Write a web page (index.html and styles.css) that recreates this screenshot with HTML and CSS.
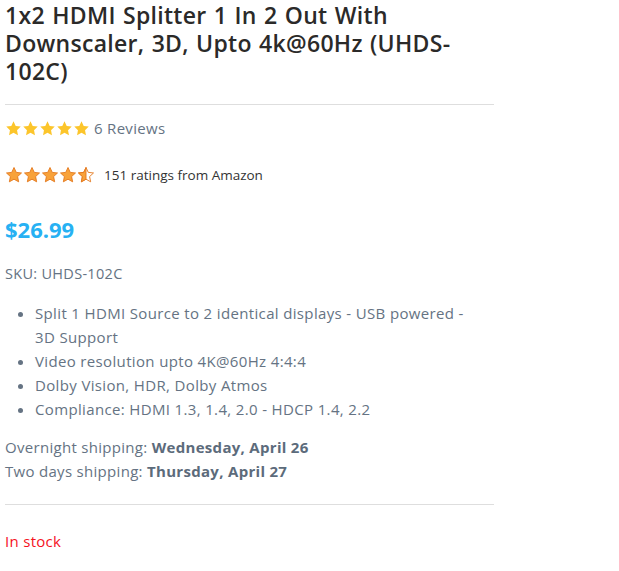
FILE: index.html
```html
<!DOCTYPE html>
<html lang="en">
  <head>
    <meta charset="utf-8">
    <link rel="stylesheet" href="styles.css">
    <title>1x2 HDMI Splitter (UHDS-102C)</title>
  </head>
  <body>
    <div class="product">
      <h1 class="product__title">1x2 HDMI Splitter 1 In 2 Out With Downscaler, 3D, Upto 4k@60Hz (UHDS-102C)</h1>

      <hr class="product__rule">

      <div class="reviews">
        <span class="stars stars--site">
          <svg viewBox="0 0 24 24"><path d="M12 1.8l3.1 6.6 7.1.9-5.2 5 1.3 7.1L12 17.9l-6.3 3.5L7 14.3l-5.2-5 7.1-.9z"/></svg>
          <svg viewBox="0 0 24 24"><path d="M12 1.8l3.1 6.6 7.1.9-5.2 5 1.3 7.1L12 17.9l-6.3 3.5L7 14.3l-5.2-5 7.1-.9z"/></svg>
          <svg viewBox="0 0 24 24"><path d="M12 1.8l3.1 6.6 7.1.9-5.2 5 1.3 7.1L12 17.9l-6.3 3.5L7 14.3l-5.2-5 7.1-.9z"/></svg>
          <svg viewBox="0 0 24 24"><path d="M12 1.8l3.1 6.6 7.1.9-5.2 5 1.3 7.1L12 17.9l-6.3 3.5L7 14.3l-5.2-5 7.1-.9z"/></svg>
          <svg viewBox="0 0 24 24"><path d="M12 1.8l3.1 6.6 7.1.9-5.2 5 1.3 7.1L12 17.9l-6.3 3.5L7 14.3l-5.2-5 7.1-.9z"/></svg>
        </span>
        <span class="reviews__count">6 Reviews</span>
      </div>

      <div class="amazon">
        <span class="stars stars--amazon">
          <svg viewBox="0 0 24 24"><path class="fill" d="M12 2l3 6.5 7 .8-5.2 4.8 1.4 7L12 17.6l-6.2 3.5 1.4-7L2 9.3l7-.8z"/></svg>
          <svg viewBox="0 0 24 24"><path class="fill" d="M12 2l3 6.5 7 .8-5.2 4.8 1.4 7L12 17.6l-6.2 3.5 1.4-7L2 9.3l7-.8z"/></svg>
          <svg viewBox="0 0 24 24"><path class="fill" d="M12 2l3 6.5 7 .8-5.2 4.8 1.4 7L12 17.6l-6.2 3.5 1.4-7L2 9.3l7-.8z"/></svg>
          <svg viewBox="0 0 24 24"><path class="fill" d="M12 2l3 6.5 7 .8-5.2 4.8 1.4 7L12 17.6l-6.2 3.5 1.4-7L2 9.3l7-.8z"/></svg>
          <svg viewBox="0 0 24 24"><path class="empty" d="M12 2l3 6.5 7 .8-5.2 4.8 1.4 7L12 17.6l-6.2 3.5 1.4-7L2 9.3l7-.8z"/><path class="fill" d="M12 2v15.6l-6.2 3.5 1.4-7L2 9.3l7-.8z"/></svg>
        </span>
        <span class="amazon__count">151 ratings from Amazon</span>
      </div>

      <div class="product__price">$26.99</div>

      <div class="product__sku">SKU: UHDS-102C</div>

      <ul class="features">
        <li>Split 1 HDMI Source to 2 identical displays - USB powered - 3D Support</li>
        <li>Video resolution upto 4K@60Hz 4:4:4</li>
        <li>Dolby Vision, HDR, Dolby Atmos</li>
        <li>Compliance: HDMI 1.3, 1.4, 2.0 - HDCP 1.4, 2.2</li>
      </ul>

      <div class="shipping">
        <div>Overnight shipping: <strong>Wednesday, April 26</strong></div>
        <div>Two days shipping: <strong>Thursday, April 27</strong></div>
      </div>

      <hr class="product__rule product__rule--bottom">

      <div class="product__stock">In stock</div>
    </div>
  </body>
</html>
```

FILE: styles.css
```css
* { box-sizing: border-box; }

body {
  margin: 0;
  font-family: "Open Sans", "Noto Sans", sans-serif;
  color: #657383;
  background: #fff;
}

.product {
  width: 499px;
  padding: 0 5px;
}

.product__title {
  margin: 1px 0 0;
  font-size: 23px;
  line-height: 28px;
  font-weight: 600;
  color: #2b2a29;
  letter-spacing: 0.3px;
  word-spacing: 1px;
}

.product__rule {
  margin: 19px 0 0;
  border: 0;
  border-top: 1px solid #dedede;
}

.reviews {
  display: flex;
  align-items: center;
  gap: 4px;
  margin-top: 11px;
  height: 24px;
}

.stars { display: flex; }

.stars--site svg {
  width: 17px;
  height: 17px;
  fill: #fcc52b;
}

.stars--amazon svg {
  width: 18px;
  height: 18px;
  stroke: #e3771c;
  stroke-width: 1.2;
  stroke-linejoin: round;
}

.stars--amazon .fill { fill: #f8a23a; }
.stars--amazon .empty { fill: #fff; }

.reviews__count {
  font-size: 15px;
  letter-spacing: 0.3px;
}

.amazon {
  display: flex;
  align-items: center;
  gap: 9px;
  margin-top: 23px;
  height: 24px;
}

.amazon__count {
  font-size: 13.5px;
  color: #333;
}

.product__price {
  margin-top: 28px;
  font-size: 22px;
  font-weight: 700;
  color: #27b1f3;
  line-height: 28px;
}

.product__sku {
  margin-top: 19px;
  font-size: 14.5px;
  line-height: 24px;
  letter-spacing: 0.3px;
}

.features {
  margin: 15px 0 0;
  padding: 0 20px 0 30px;
  font-size: 15px;
  line-height: 24px;
  letter-spacing: 0.35px;
}

.shipping {
  margin-top: 14px;
  font-size: 15px;
  line-height: 24px;
  letter-spacing: 0.3px;
}

.shipping strong {
  font-weight: 700;
  color: #5c6b7b;
}

.product__rule--bottom {
  margin-top: 21px;
}

.product__stock {
  margin-top: 24px;
  font-size: 15px;
  line-height: 24px;
  color: #f5121d;
  letter-spacing: 0.3px;
}
```
